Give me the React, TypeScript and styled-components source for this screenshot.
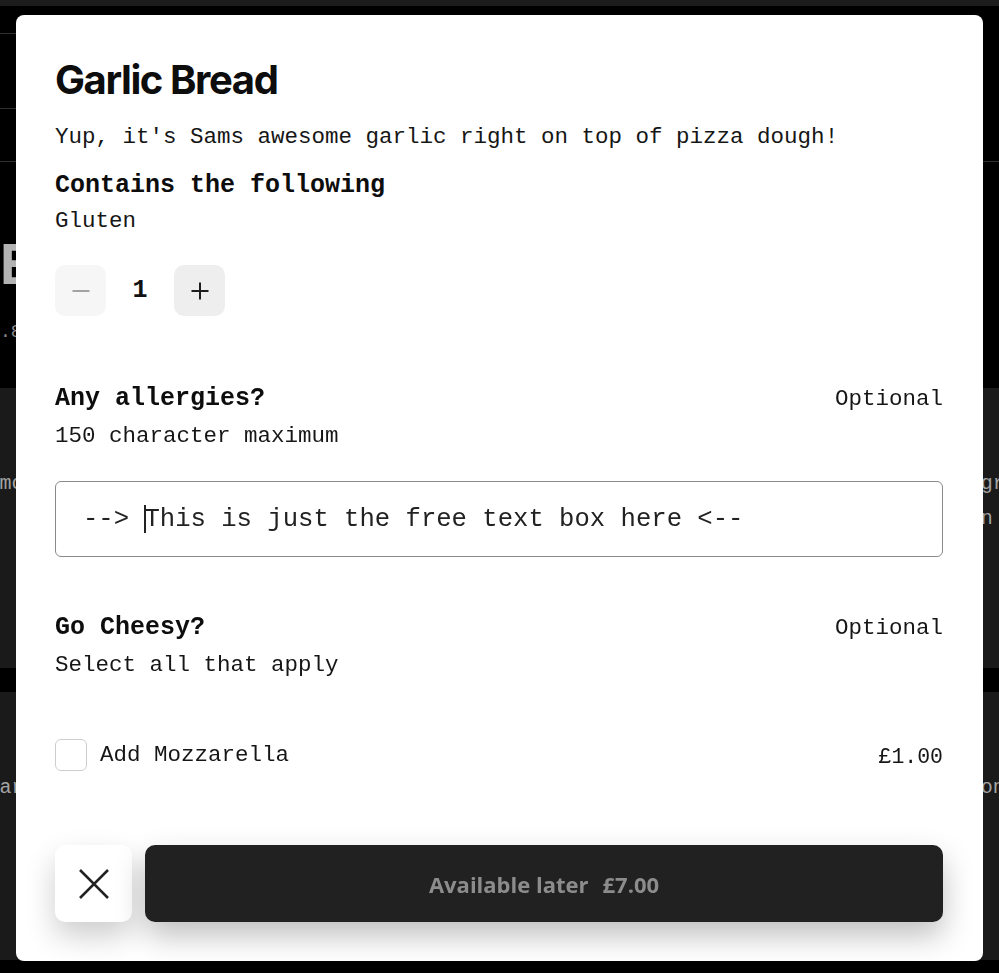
import React from "react";
import styled, { createGlobalStyle } from "styled-components";

const GlobalStyle = createGlobalStyle`
  html, body { margin: 0; padding: 0; background: #000; }
  body { overflow: hidden; font-family: "Liberation Mono", "Courier New", monospace; }
  * { box-sizing: border-box; }
`;

const MONO = `"Liberation Mono", "Courier New", monospace`;

/* ---------- background page ---------- */
const Page = styled.div`
  width: 999px;
  height: 973px;
  background: #000;
  overflow: hidden;
  display: flex;
  flex-direction: column;
`;

const TopStrip = styled.div`
  height: 6px;
  flex-shrink: 0;
  background: #1c1c1c;
`;

const NavRow = styled.div<{ $h: number; $w: string }>`
  height: ${(p) => p.$h}px;
  width: ${(p) => p.$w};
  flex-shrink: 0;
  border-bottom: 1px solid #2f2f2f;
`;

const Hero = styled.div`
  height: 226px;
  flex-shrink: 0;
  padding-top: 75px;
  display: flex;
  flex-direction: column;
`;

const HeroTitle = styled.div`
  font-family: Inter, sans-serif;
  font-weight: 700;
  font-size: 55px;
  line-height: 55px;
  color: #b3b3b3;
  white-space: nowrap;
`;

const HeroMeta = styled.div`
  margin-top: 29px;
  font-family: ${MONO};
  font-size: 18px;
  line-height: 22px;
  color: #8a8a8a;
`;

const CardsWrap = styled.div`
  display: flex;
  justify-content: center;
`;

const CardGrid = styled.div`
  flex: 0 0 1160px;
  display: grid;
  grid-template-columns: repeat(3, 1fr);
  grid-template-rows: 280px 268px;
  row-gap: 24px;
  column-gap: 24px;
`;

const Card = styled.div`
  background: #1a1a1a;
  padding: 78px 20px 0;
  overflow: hidden;
`;

const CardLine = styled.div`
  font-family: ${MONO};
  font-size: 20px;
  line-height: 35px;
  color: #a3a3a3;
  white-space: nowrap;
`;

/* ---------- modal ---------- */
const Overlay = styled.div`
  position: fixed;
  inset: 0;
  padding: 15px 16px 12px;
  display: flex;
`;

const Modal = styled.div`
  flex: 1;
  background: #fff;
  border-radius: 8px;
  padding: 40px 40px 39px 39px;
  display: flex;
  flex-direction: column;
  color: #111;
  font-family: ${MONO};
`;

const Title = styled.h1`
  margin: 0;
  font-family: Inter, sans-serif;
  font-weight: 700;
  font-size: 40px;
  letter-spacing: -1.4px;
  line-height: 49px;
  color: #0d0d0d;
`;

const Text = styled.div<{ $mt?: number }>`
  margin-top: ${(p) => p.$mt ?? 0}px;
  font-size: 22.5px;
  line-height: 26px;
  padding-top: 4px;
  color: #161616;
  white-space: nowrap;
`;

const Heading = styled.div<{ $mt?: number }>`
  margin-top: ${(p) => p.$mt ?? 0}px;
  font-weight: 700;
  font-size: 25px;
  line-height: 26px;
  padding-top: 4px;
  color: #0d0d0d;
`;

const GroupHeader = styled.div<{ $mt: number }>`
  margin-top: ${(p) => p.$mt}px;
  display: flex;
  justify-content: space-between;
  align-items: flex-start;
`;

const Optional = styled.span`
  font-size: 22.5px;
  line-height: 25px;
  padding-top: 5px;
  color: #161616;
`;

const Stepper = styled.div`
  margin-top: 31px;
  display: flex;
  align-items: center;
`;

const StepButton = styled.button<{ $disabled?: boolean }>`
  width: 51px;
  height: 51px;
  border: none;
  border-radius: 10px;
  background: ${(p) => (p.$disabled ? "#f6f6f6" : "#eeeeee")};
  color: ${(p) => (p.$disabled ? "#a3a3a3" : "#1e1e1e")};
  display: flex;
  align-items: center;
  justify-content: center;
  padding: 0;
`;

const Count = styled.span`
  width: 68px;
  text-align: center;
  font-weight: 700;
  font-size: 25px;
  line-height: 30px;
  color: #111;
`;

const TextBox = styled.div`
  margin-top: 32px;
  height: 76px;
  border: 1px solid #8a8a8a;
  border-radius: 6px;
  padding-left: 27px;
  display: flex;
  align-items: center;
  font-size: 25.6px;
  color: #222;
  white-space: pre;
`;

const Caret = styled.span`
  display: inline-block;
  width: 2px;
  height: 28px;
  margin-right: -2px;
  background: #222;
  vertical-align: middle;
`;

const OptionRow = styled.label`
  margin-top: 61px;
  display: flex;
  align-items: center;
  height: 32px;
`;

const CheckBox = styled.span`
  width: 32px;
  height: 32px;
  border: 1.5px solid #cdcdcd;
  border-radius: 6px;
  flex-shrink: 0;
`;

const OptionLabel = styled.span`
  margin-left: 13px;
  font-size: 22.5px;
  line-height: 30px;
  color: #161616;
`;

const OptionPrice = styled.span`
  margin-left: auto;
  font-size: 21.5px;
  line-height: 30px;
  padding-top: 4px;
  color: #161616;
`;

const Footer = styled.div`
  margin-top: auto;
  display: flex;
  gap: 13px;
  height: 77px;
`;

const CloseButton = styled.button`
  width: 77px;
  border: none;
  border-radius: 10px;
  background: #fff;
  box-shadow: 0 14px 30px rgba(0, 0, 0, 0.2);
  display: flex;
  align-items: center;
  justify-content: center;
  padding: 0;
`;

const AddButton = styled.button`
  flex: 1;
  border: none;
  border-radius: 10px;
  background: #212121;
  box-shadow: 0 14px 30px rgba(0, 0, 0, 0.25);
  display: flex;
  align-items: center;
  justify-content: center;
  gap: 14px;
  font-family: "Open Sans", Roboto, sans-serif;
  font-weight: 700;
  font-size: 22px;
  color: #8c8c8c;
`;

export default function App() {
  return (
    <>
      <GlobalStyle />
      <Page>
        <TopStrip />
        <NavRow $h={28} $w="55%" />
        <NavRow $h={75} $w="55%" />
        <NavRow $h={53} $w="100%" />
        <Hero>
          <HeroTitle>EAT WELL</HeroTitle>
          <HeroMeta>.8 mi</HeroMeta>
        </Hero>
        <CardsWrap>
          <CardGrid>
            <Card>
              <CardLine>Fior mozzarella &amp; basil</CardLine>
            </Card>
            <Card />
            <Card>
              <CardLine>Roasted red peppers, grilled</CardLine>
              <CardLine>served with your lemon</CardLine>
            </Card>
            <Card>
              <CardLine>Warm artisan loaf</CardLine>
            </Card>
            <Card />
            <Card>
              <CardLine>Sourdough base baked on stone</CardLine>
            </Card>
          </CardGrid>
        </CardsWrap>
      </Page>

      <Overlay>
        <Modal>
          <Title>Garlic Bread</Title>
          <Text $mt={16}>Yup, it's Sams awesome garlic right on top of pizza dough!</Text>
          <Heading $mt={19}>Contains the following</Heading>
          <Text $mt={5}>Gluten</Text>

          <Stepper>
            <StepButton $disabled aria-label="decrease">
              <svg width="18" height="18" viewBox="0 0 18 18">
                <path d="M0.5 9H17.5" stroke="currentColor" strokeWidth="2" />
              </svg>
            </StepButton>
            <Count>1</Count>
            <StepButton aria-label="increase">
              <svg width="18" height="18" viewBox="0 0 18 18">
                <path d="M0.5 9H17.5M9 0.5V17.5" stroke="currentColor" strokeWidth="2" />
              </svg>
            </StepButton>
          </Stepper>

          <GroupHeader $mt={66}>
            <Heading>Any allergies?</Heading>
            <Optional>Optional</Optional>
          </GroupHeader>
          <Text $mt={7}>150 character maximum</Text>
          <TextBox>
            {"--> "}
            <Caret />
            {"This is just the free text box here <--"}
          </TextBox>

          <GroupHeader $mt={54}>
            <Heading>Go Cheesy?</Heading>
            <Optional>Optional</Optional>
          </GroupHeader>
          <Text $mt={7}>Select all that apply</Text>

          <OptionRow>
            <CheckBox />
            <OptionLabel>Add Mozzarella</OptionLabel>
            <OptionPrice>£1.00</OptionPrice>
          </OptionRow>

          <Footer>
            <CloseButton aria-label="close">
              <svg width="30" height="30" viewBox="0 0 30 30">
                <path d="M1 1L29 29M29 1L1 29" stroke="#222" strokeWidth="2.6" />
              </svg>
            </CloseButton>
            <AddButton>
              <span>Available later</span>
              <span>£7.00</span>
            </AddButton>
          </Footer>
        </Modal>
      </Overlay>
    </>
  );
}
